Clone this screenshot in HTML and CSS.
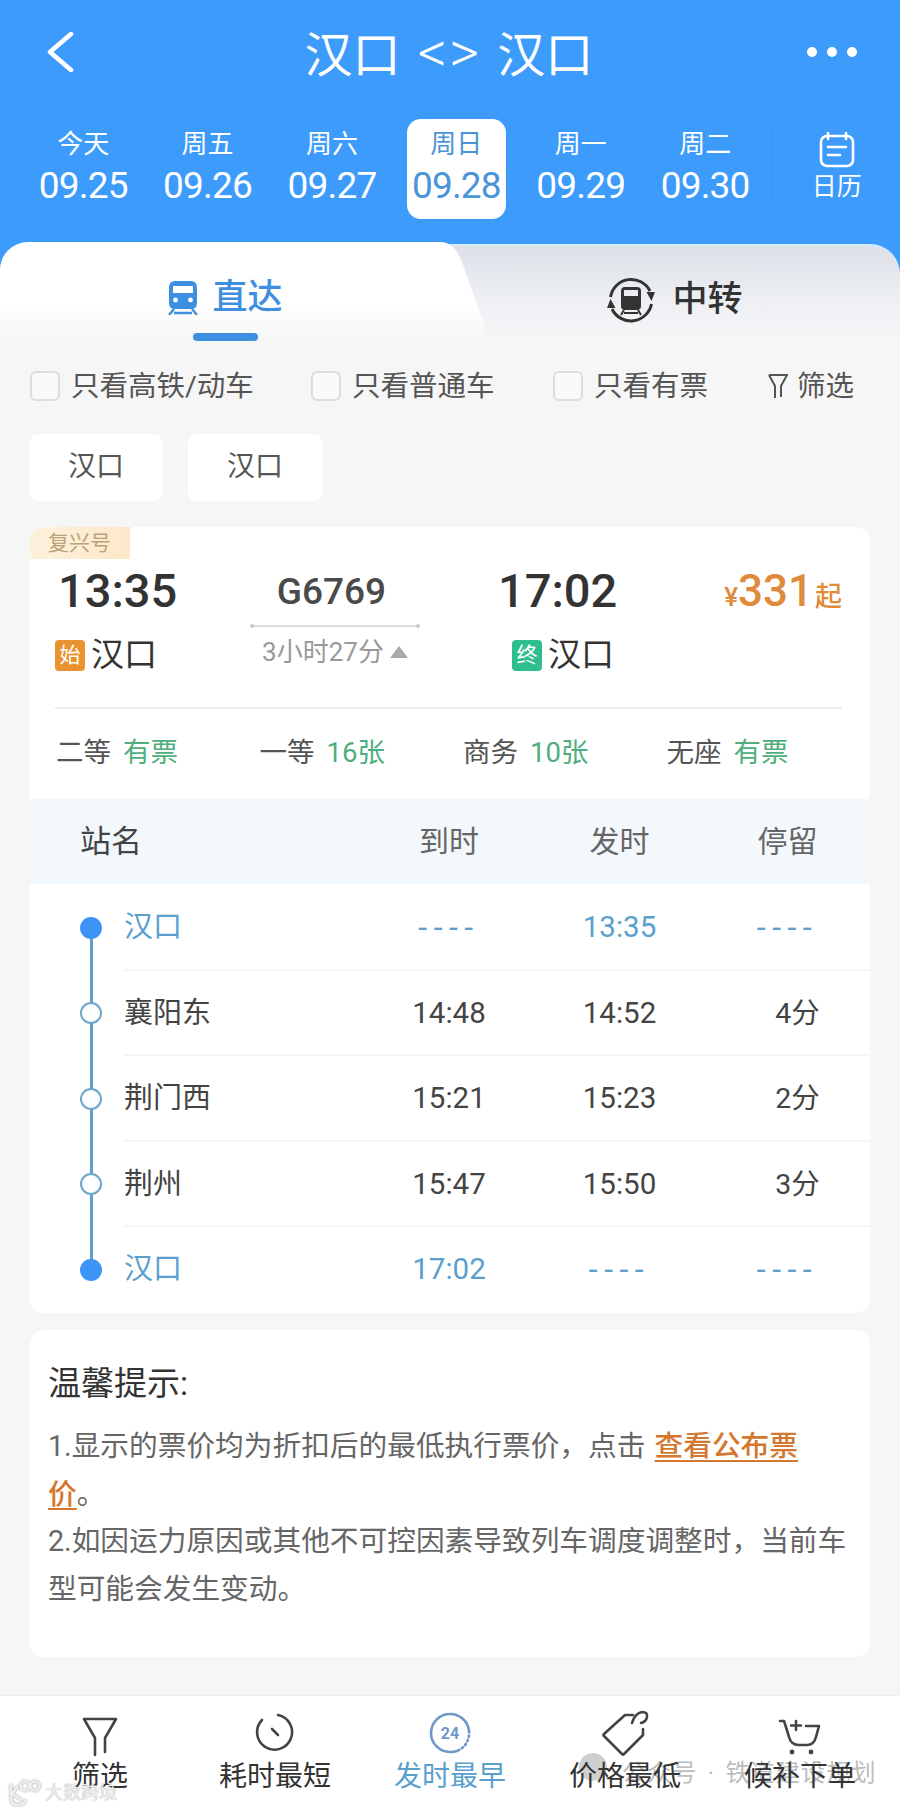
FILE: index.html
```html
<!DOCTYPE html>
<html lang="zh-CN">
<head>
    <meta charset="UTF-8">
    <meta name="viewport" content="width=device-width, initial-scale=1.0">
    <title>汉口 &lt;&gt; 汉口</title>
    <link rel="stylesheet" href="styles.css">
</head>
<body>
    <div class="hero">
        <div class="topbar">
            <svg class="back-icon" viewBox="0 0 28 40" width="28" height="40"><path d="M25 2 L4 20 L25 38"/></svg>
            <div class="title">汉口<span>&lt;&gt;</span>汉口</div>
            <div class="more"><i></i><i></i><i></i></div>
        </div>

        <div class="date-strip">
            <div class="date-item"><span class="day">今天</span><span class="date">09.25</span></div>
            <div class="date-item"><span class="day">周五</span><span class="date">09.26</span></div>
            <div class="date-item"><span class="day">周六</span><span class="date">09.27</span></div>
            <div class="date-item active"><span class="day">周日</span><span class="date">09.28</span></div>
            <div class="date-item"><span class="day">周一</span><span class="date">09.29</span></div>
            <div class="date-item"><span class="day">周二</span><span class="date">09.30</span></div>
            <div class="calendar">
                <svg viewBox="0 0 36 36" width="36" height="36">
                    <rect x="2" y="4" width="32" height="30" rx="6"/>
                    <path d="M9 1 V7 M27 1 V7 M9 15 H27 M9 23 H21"/>
                </svg>
                <span>日历</span>
            </div>
        </div>

        <div class="tabs">
            <div class="tab tab-active">
                <div class="tab-label">
                    <svg viewBox="0 0 32 34" width="32" height="34">
                        <path class="fill-blue" d="M8 0 H24 Q30 0 30 7 V22 Q30 28 24 28 H8 Q2 28 2 22 V7 Q2 0 8 0 Z M6 5 V12 H26 V5 Z"/>
                        <circle cx="8.5" cy="19" r="2.4" fill="#fff"/>
                        <circle cx="23.5" cy="19" r="2.4" fill="#fff"/>
                        <path class="stroke-blue" d="M7 28 L2 34 M25 28 L30 34 M7 32 H25"/>
                    </svg>
                    <span>直达</span>
                </div>
                <div class="tab-bar"></div>
            </div>
            <div class="tab tab-other">
                <div class="tab-label">
                    <svg viewBox="0 0 48 48" width="48" height="48">
                        <path class="ring" d="M3.500 21 A21 21 0 0 1 43 15 M44.500 28 A21 21 0 0 1 5 33"/>
                        <path class="arrow" d="M39.500 16 H48 L44.500 25 Z M8.500 32 H0 L3.500 23 Z"/>
                        <path class="arrow" d="M18 11 H30 Q34 11 34 15 V30 Q34 34 30 34 H18 Q14 34 14 30 V15 Q14 11 18 11 Z M17 14 V20 H31 V14 Z"/>
                        <path class="ring thin" d="M17 37 H31 M17 34 L14 39 M31 34 L34 39"/>
                    </svg>
                    <span>中转</span>
                </div>
            </div>
        </div>
    </div>

    <div class="filters">
        <label class="check check-wide"><i></i>只看高铁/动车</label>
        <label class="check check-mid"><i></i>只看普通车</label>
        <label class="check check-short"><i></i>只看有票</label>
        <div class="filter-link">
            <svg viewBox="0 0 20 26" width="20" height="26"><path d="M1 2 H19 L13 13 V24 M7 25 V13 L1 2"/></svg>
            筛选
        </div>
    </div>

    <div class="chips">
        <div class="chip">汉口</div>
        <div class="chip chip-second">汉口</div>
    </div>

    <div class="train-card">
        <div class="badge">复兴号</div>
        <div class="train-head">
            <div class="endpoint">
                <div class="time">13:35</div>
                <div class="station"><b class="mark mark-start">始</b>汉口</div>
            </div>
            <div class="train-mid">
                <div class="train-no">G6769</div>
                <div class="train-line"></div>
                <div class="duration">3小时27分<i class="caret"></i></div>
            </div>
            <div class="endpoint endpoint-end">
                <div class="time">17:02</div>
                <div class="station"><b class="mark mark-end">终</b>汉口</div>
            </div>
            <div class="price"><small>¥</small>331<em>起</em></div>
        </div>

        <div class="seats">
            <div class="seat">二等<span>有票</span></div>
            <div class="seat">一等<span>16张</span></div>
            <div class="seat">商务<span>10张</span></div>
            <div class="seat">无座<span>有票</span></div>
        </div>

        <div class="stop-head">
            <div class="stop-head-name">站名</div>
            <div>到时</div>
            <div>发时</div>
            <div>停留</div>
        </div>

        <div class="stops">
            <div class="stop stop-first stop-main">
                <div class="rail"><i></i></div>
                <div class="stop-cells">
                    <div class="stop-name">汉口</div>
                    <div class="dash">----</div>
                    <div>13:35</div>
                    <div class="dash">----</div>
                </div>
            </div>
            <div class="stop">
                <div class="rail"><i></i></div>
                <div class="stop-cells">
                    <div class="stop-name">襄阳东</div>
                    <div>14:48</div>
                    <div>14:52</div>
                    <div class="stay">4分</div>
                </div>
            </div>
            <div class="stop">
                <div class="rail"><i></i></div>
                <div class="stop-cells">
                    <div class="stop-name">荆门西</div>
                    <div>15:21</div>
                    <div>15:23</div>
                    <div class="stay">2分</div>
                </div>
            </div>
            <div class="stop">
                <div class="rail"><i></i></div>
                <div class="stop-cells">
                    <div class="stop-name">荆州</div>
                    <div>15:47</div>
                    <div>15:50</div>
                    <div class="stay">3分</div>
                </div>
            </div>
            <div class="stop stop-last stop-main">
                <div class="rail"><i></i></div>
                <div class="stop-cells">
                    <div class="stop-name">汉口</div>
                    <div>17:02</div>
                    <div class="dash">----</div>
                    <div class="dash">----</div>
                </div>
            </div>
        </div>
    </div>

    <div class="tips">
        <div class="tips-title">温馨提示:</div>
        <p>1.显示的票价均为折扣后的最低执行票价，点击 <a>查看公布票价</a>。</p>
        <p>2.如因运力原因或其他不可控因素导致列车调度调整时，当前车型可能会发生变动。</p>
    </div>

    <div class="bottom-bar">
        <div class="stamp-account"><i></i>公众号 · 铁道建设规划</div>
        <div class="stamp-brand">
            <svg viewBox="0 0 34 30" width="34" height="30">
                <path d="M3 6 V20 Q3 27 10 27 Q15 27 18 22 M10 8 L4 16 L14 22"/>
                <circle cx="17" cy="8" r="4.500"/>
                <circle cx="27" cy="8" r="4.500"/>
            </svg>
            大数跨境
        </div>

        <div class="bar-item">
            <svg viewBox="0 0 48 48" width="48" height="48"><path d="M8 10 H40 L29 29 V43 M19 46 V29 L8 10"/></svg>
            <span>筛选</span>
        </div>
        <div class="bar-item">
            <svg viewBox="0 0 48 48" width="48" height="48"><path d="M27 6 A17.500 17.500 0 1 1 11 11 M21 20 L27 26"/></svg>
            <span>耗时最短</span>
        </div>
        <div class="bar-item bar-item-on">
            <svg viewBox="0 0 48 48" width="48" height="48">
                <path class="clock-solid" d="M24 5 A19 19 0 0 1 43 22 M31 42 A19 19 0 0 1 24 43 A19 19 0 0 1 24 5"/>
                <path class="clock-dots" d="M43 22 A19 19 0 0 1 31 42"/>
                <text x="24" y="30" text-anchor="middle">24</text>
            </svg>
            <span>发时最早</span>
        </div>
        <div class="bar-item">
            <svg viewBox="0 0 48 48" width="48" height="48"><path d="M3 25 L24 6 H32 M42 20 V26 L23 45 Q22 46 21 45 L3 27 Q2 26 3 25 M31 14 Q34 4 41 3 Q47 3 46 8 Q45 13 40 14"/></svg>
            <span>价格最低</span>
        </div>
        <div class="bar-item">
            <svg viewBox="0 0 48 48" width="48" height="48">
                <path d="M4 12 H8 Q10 18 13 28 Q15 36 23 36 H31 Q38 36 40 28 L43 17 H30 M20 12 V21 M15 16.500 H25"/>
                <circle class="wheel" cx="16" cy="43" r="2.400"/>
                <circle class="wheel" cx="35" cy="43" r="2.400"/>
            </svg>
            <span>候补下单</span>
        </div>
    </div>
</body>
</html>
```

FILE: styles.css
```css
:root {
    --blue: #3d9bfb;
    --tab-blue: #3f8fe0;
    --page-bg: #f6f6f6;
    --text: #333;
    --text-soft: #555;
    --line: #eeeeee;
    --green: #4fae7c;
    --orange: #e08a3c;
    --stop-blue: #5a9fcd;
}

* {
    box-sizing: border-box;
}

body {
    margin: 0;
    height: 1807px;
    overflow: hidden;
    background: var(--page-bg);
    color: var(--text);
    font-family: Roboto, "Noto Sans CJK SC", sans-serif;
}

/* blue header */
.hero {
    background: var(--blue);
    height: 340px;
}

.topbar {
    height: 104px;
    display: flex;
    align-items: center;
    justify-content: space-between;
    padding: 0 43px 0 46px;
    color: #fff;
}

.back-icon path {
    fill: none;
    stroke: #fff;
    stroke-width: 4.5;
    stroke-linejoin: round;
    stroke-linecap: round;
}

.title {
    margin-left: 17px;
    font-size: 48px;
    line-height: 1;
    white-space: nowrap;
}

.title span {
    margin: 0 16px 0 17px;
    font-size: 58px;
    font-weight: 300;
    letter-spacing: 2px;
}

.more {
    display: flex;
    gap: 10px;
}

.more i {
    width: 10px;
    height: 10px;
    border-radius: 50%;
    background: #fff;
}

.date-strip {
    display: flex;
    height: 100px;
    margin-top: 15px;
    padding-left: 21px;
    color: #fff;
}

.date-item {
    width: 99px;
    margin: 0 12.85px;
    display: flex;
    flex-direction: column;
    align-items: center;
}

.date-item.active {
    background: #fff;
    border-radius: 14px;
    color: #4a94d8;
}

.day {
    margin-top: 10px;
    font-size: 26px;
    line-height: 30px;
}

.date {
    margin-top: 6px;
    font-size: 37px;
    line-height: 42px;
    letter-spacing: -0.8px;
    white-space: nowrap;
}

.calendar {
    width: 129px;
    margin-left: 4px;
    border-left: 2px solid #3a94f2;
    display: flex;
    flex-direction: column;
    align-items: center;
    height: 70px;
    margin-top: 13px;
    font-size: 25px;
    line-height: 34px;
}

.calendar svg {
    flex: none;
}

.calendar rect,
.calendar path {
    fill: none;
    stroke: #fff;
    stroke-width: 2.6;
    stroke-linecap: round;
}

.calendar span {
    margin-top: 2px;
}

/* direct / transfer tabs */
.tabs {
    display: flex;
    height: 96px;
    margin-top: 25px;
    border-radius: 30px 30px 0 0;
    background: linear-gradient(#dde1e8, #eef0f4 62%, #f3f4f6 88%, var(--page-bg));
    border-top: 2px solid #d3ecfb;
}

.tab {
    display: flex;
    flex-direction: column;
    align-items: center;
}

.tab-active {
    width: 490px;
    height: 100px;
    margin-top: -4px;
    padding-right: 40px;
    background: linear-gradient(#fff 60%, var(--page-bg));
    border-top-left-radius: 28px;
    clip-path: path("M0 0 H440 C452 0 458 10 462 20 L490 100 H0 Z");
}

.tab-other {
    flex: 1;
    padding-right: 40px;
    margin-top: -2px;
}

.tab-label {
    display: flex;
    align-items: center;
    margin-top: 34px;
    height: 44px;
    font-size: 35px;
    font-weight: 500;
    line-height: 44px;
}

.tab-active .tab-label {
    color: var(--tab-blue);
    gap: 13px;
}

.tab-other .tab-label {
    gap: 17px;
}

.fill-blue {
    fill: #3f8fe0;
    fill-rule: evenodd;
}

.stroke-blue {
    fill: none;
    stroke: #3f8fe0;
    stroke-width: 2.4;
}

.ring {
    fill: none;
    stroke: #333;
    stroke-width: 3;
}

.ring.thin {
    stroke-width: 2;
}

.arrow {
    fill: #333;
    fill-rule: evenodd;
}

.tab-bar {
    width: 65px;
    height: 8px;
    margin-top: 13px;
    border-radius: 4px;
    background: var(--tab-blue);
}

/* filter row */
.filters {
    display: flex;
    align-items: center;
    height: 40px;
    margin-top: 26px;
    padding-left: 30px;
    font-size: 28.5px;
    line-height: 43px;
    color: var(--text-soft);
}

.check {
    display: flex;
    align-items: center;
    gap: 11px;
    white-space: nowrap;
}

.check i {
    width: 30px;
    height: 30px;
    border: 2px solid #ddd;
    border-radius: 6px;
    background: #f9f9f9;
}

.check-wide {
    width: 281px;
}

.check-mid {
    width: 242px;
}

.check-short {
    width: 215px;
}

.filter-link {
    display: flex;
    align-items: center;
    gap: 9px;
    white-space: nowrap;
}

.filter-link svg path {
    fill: none;
    stroke: #555;
    stroke-width: 2;
}

/* station chips */
.chips {
    display: flex;
    gap: 26px;
    margin-top: 28px;
    padding-left: 30px;
}

.chip {
    width: 132px;
    height: 67px;
    border-radius: 8px;
    background: #fff;
    font-size: 28px;
    line-height: 66px;
    text-align: center;
    color: var(--text-soft);
}

.chip-second {
    width: 134px;
}

/* train card */
.train-card {
    width: 840px;
    height: 786px;
    margin: 26px 0 0 30px;
    border-radius: 14px;
    background: #fff;
    overflow: hidden;
}

.badge {
    width: 100px;
    height: 32px;
    padding-left: 18px;
    background: linear-gradient(100deg, #fdf1dd, #fde8c8);
    font-size: 21px;
    line-height: 32px;
    color: #b7a47a;
}

.train-head {
    display: flex;
    height: 150px;
    margin: 0 28px 0 25px;
    border-bottom: 2px solid var(--line);
}

.endpoint {
    width: 195px;
}

.endpoint-end {
    width: 224px;
    margin-left: 75px;
}

.time {
    height: 64px;
    padding-left: 3px;
    font-size: 47px;
    font-weight: 500;
    line-height: 64px;
    white-space: nowrap;
}

.station {
    display: flex;
    align-items: center;
    gap: 6px;
    height: 44px;
    margin-top: 10px;
    font-size: 33px;
    line-height: 44px;
    color: var(--text);
}

.endpoint-end .station {
    padding-left: 17px;
}

.mark {
    width: 30px;
    height: 31px;
    border-radius: 4px;
    color: #fff;
    font-size: 21px;
    font-weight: 400;
    line-height: 31px;
    text-align: center;
}

.mark-start {
    background: #e8932f;
}

.mark-end {
    background: #2fbf8f;
}

.train-mid {
    width: 170px;
    display: flex;
    flex-direction: column;
    align-items: center;
}

.train-no {
    height: 66px;
    margin-right: 7px;
    font-size: 37px;
    font-weight: 500;
    line-height: 66px;
    color: #4a4a4a;
}

.train-line {
    position: relative;
    width: 100%;
    height: 2px;
    background: #ddd;
}

.train-line::before,
.train-line::after {
    content: "";
    position: absolute;
    top: -1px;
    width: 4px;
    height: 4px;
    border-radius: 50%;
    background: #ccc;
}

.train-line::before {
    left: 0;
}

.train-line::after {
    right: 0;
}

.duration {
    display: flex;
    align-items: center;
    gap: 6px;
    margin-top: 7px;
    font-size: 26px;
    line-height: 36px;
    color: #999;
    white-space: nowrap;
}

.caret {
    width: 0;
    height: 0;
    border-left: 9px solid transparent;
    border-right: 9px solid transparent;
    border-bottom: 12px solid #aaa;
}

.price {
    margin-left: auto;
    height: 64px;
    font-size: 44px;
    font-weight: 500;
    line-height: 64px;
    color: var(--orange);
    white-space: nowrap;
}

.price small {
    font-size: 26px;
}

.price em {
    margin-left: 2px;
    font-size: 27px;
    font-style: normal;
}

.seats {
    display: flex;
    height: 90px;
    padding-left: 26px;
    font-size: 27.5px;
    line-height: 87px;
    color: var(--text-soft);
}

.seat {
    width: 203.5px;
    white-space: nowrap;
}

.seat span {
    margin-left: 12px;
    color: var(--green);
}

.stop-head,
.stop-cells {
    display: grid;
    grid-template-columns: 240px 170px 171px 165px;
    text-align: center;
}

.stop-head {
    height: 85px;
    padding-left: 94px;
    background: #f3f8fd;
    font-size: 30px;
    line-height: 85px;
    color: #666;
}

.stop-head-name {
    margin-left: -44px;
    font-size: 31px;
    color: #444;
    text-align: left;
}

.stops {
    padding-top: 1px;
}

.stop {
    display: flex;
    height: 85.5px;
}

.rail {
    position: relative;
    flex: none;
    width: 94px;
    display: flex;
    align-items: center;
    padding-left: 50px;
}

.rail::before {
    content: "";
    position: absolute;
    left: 60px;
    top: 0;
    bottom: 0;
    width: 2.6px;
    background: #5f9fca;
}

.stop-first .rail::before {
    top: 50%;
}

.stop-last .rail::before {
    bottom: 50%;
}

.rail i {
    position: relative;
    width: 22px;
    height: 22px;
    border: 2.5px solid #6ea5cb;
    border-radius: 50%;
    background: #fff;
}

.stop-main .rail i {
    border-color: #3d94f5;
    background: #3d94f5;
}

.stop-cells {
    flex: 1;
    border-bottom: 2px solid #f5f5f5;
    font-size: 29.5px;
    line-height: 85px;
    color: #444;
}

.stop-last .stop-cells {
    border-bottom: none;
}

.stop-name {
    font-size: 29px;
    text-align: left;
}

.stop-main .stop-cells {
    color: var(--stop-blue);
}

.dash {
    font-size: 32px;
    letter-spacing: 6.5px;
}

.stay {
    padding-left: 20px;
    font-size: 28.5px;
}

/* notes */
.tips {
    width: 840px;
    height: 327px;
    margin: 17px 0 0 30px;
    padding: 32px 18px 0;
    border-radius: 14px;
    background: #fff;
    font-size: 28.7px;
    line-height: 47.5px;
    word-spacing: 2px;
    color: #666;
}

.tips-title {
    margin-bottom: 17px;
    font-size: 33px;
    line-height: 44px;
    color: #333;
}

.tips p {
    width: 802px;
    margin: 0;
}

.tips a {
    color: #d4772f;
    font-weight: 500;
    text-decoration: underline;
    text-underline-offset: 4px;
}

/* bottom bar */
.bottom-bar {
    position: relative;
    display: grid;
    grid-template-columns: repeat(5, 175px);
    height: 112px;
    margin-top: 38px;
    padding: 13px 12.5px 0;
    background: #fff;
    border-top: 1px solid #efefef;
}

.bar-item {
    position: relative;
    display: flex;
    flex-direction: column;
    align-items: center;
    font-size: 28px;
    line-height: 38px;
    color: #333;
}

.bar-item svg {
    flex: none;
    fill: none;
    stroke: #444;
    stroke-width: 2.6;
    stroke-linejoin: round;
    stroke-linecap: round;
}

.bar-item span {
    margin-top: 1px;
    white-space: nowrap;
}

.bar-item-on {
    color: #5a9fcd;
}

.clock-solid {
    stroke: #6f97c9;
}

.clock-dots {
    stroke: #6f97c9;
    stroke-dasharray: 1.5 3;
}

.bar-item-on svg text {
    fill: #6f97c9;
    stroke: none;
    font-size: 16px;
    font-weight: 700;
}

.wheel {
    fill: #444;
    stroke: none;
}

.stamp-account {
    position: absolute;
    left: 579px;
    top: 59px;
    display: flex;
    align-items: center;
    gap: 15px;
    font-size: 24px;
    line-height: 36px;
    letter-spacing: 1.2px;
    word-spacing: 3px;
    color: #bdbdbd;
    white-space: nowrap;
}

.stamp-account i {
    width: 28px;
    height: 28px;
    margin-top: -12px;
    border-radius: 50%;
    background: #cfcfcf;
}

.stamp-brand {
    position: absolute;
    z-index: 1;
    left: 8px;
    top: 82px;
    display: flex;
    align-items: center;
    gap: 3px;
    font-size: 18px;
    line-height: 24px;
    color: #eee;
    text-shadow: 0 0 1px #999;
    white-space: nowrap;
}

.stamp-brand svg {
    fill: none;
    stroke: #eee;
    stroke-width: 2.6;
    filter: drop-shadow(0 0 1px #999);
}
```
